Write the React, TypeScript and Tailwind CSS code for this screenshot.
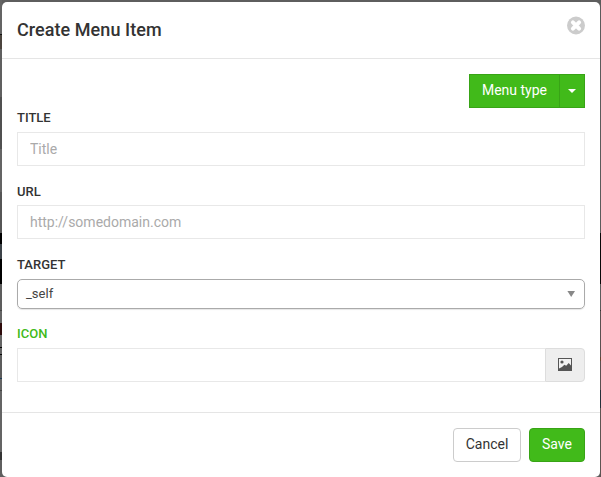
import type { ReactNode } from "react";

const leftEdge: [number, string][] = [
  [34, "#646464"], [1, "#111"], [14, "#4b443e"], [48, "#606060"], [52, "#505050"],
  [43, "#646464"], [41, "#565656"], [11, "#000"], [15, "#3c4248"], [25, "#000"],
  [26, "#5d5d5d"], [1, "#444"], [12, "#646464"], [12, "#2e0b0b"], [12, "#646464"],
  [1, "#050505"], [6, "#646464"], [1, "#050505"], [23, "#5c5c5c"], [1, "#1c3b55"],
  [11, "#646464"], [1, "#444"], [61, "#646464"], [8, "#333"], [17, "#5f5f5f"],
];

const rightEdge: [number, string][] = [
  [233, "#5b5b5b"], [51, "#080808"], [26, "#5b5b5b"], [1, "#333"],
  [46, "#5a5050"], [4, "#65452f"], [29, "#5a5050"], [18, "#24303a"], [69, "#5d5452"],
];

function Edge({ bands, className }: { bands: [number, string][]; className: string }) {
  return (
    <div className={`h-full shrink-0 overflow-hidden ${className}`} aria-hidden="true">
      {bands.map(([height, background], i) => (
        <div key={i} style={{ height, background }} />
      ))}
    </div>
  );
}

function Label({ children, className = "text-[#333]" }: { children: ReactNode; className?: string }) {
  return <label className={`block h-[18px] text-[13px] leading-[18px] font-medium ${className}`}>{children}</label>;
}

const inputClass =
  "block h-[34px] w-full border border-[#e8e8e8] bg-white px-3 text-sm text-[#555] outline-none placeholder:text-[#aaa]";

export default function App() {
  return (
    <div className="flex h-[477px] w-[601px] overflow-hidden bg-[#5e5e5e] font-[Roboto,sans-serif]">
      <Edge bands={leftEdge} className="w-[2px]" />
      <div className="flex min-w-0 flex-1 flex-col pt-[2px]">
        <div className="flex flex-1 flex-col rounded-[5px] bg-white">
          <header className="flex h-[57px] shrink-0 justify-between border-b border-[#e5e5e5] pt-[15px] pr-[15px] pl-[15px]">
            <h4 className="h-[26px] text-[18px] leading-[26px] font-medium tracking-[0.06px] text-[#333]">Create Menu Item</h4>
            <button className="-mt-[2px] h-[20px] w-[18px]" aria-label="Close">
              <svg width="18" height="20" viewBox="0 0 18 20">
                <circle cx="9" cy="10.5" r="9" fill="#ccc" />
                <path d="M5.9 7.4l6.2 6.2M12.1 7.4l-6.2 6.2" stroke="#fff" strokeWidth="4" strokeLinecap="round" />
              </svg>
            </button>
          </header>

          <main className="flex h-[353px] shrink-0 flex-col px-[15px] pt-[15px]">
            <div className="flex h-[34px] justify-end">
              <button className="h-[34px] w-[91px] border border-[#38a416] bg-[#41ba1a] pb-[2px] text-sm text-white">
                Menu type
              </button>
              <button
                className="-ml-px flex h-[34px] w-[26px] items-center justify-center border border-[#38a416] bg-[#41ba1a]"
                aria-label="Choose menu type"
              >
                <svg width="8" height="4" viewBox="0 0 8 4"><path d="M0 0h8L4 4z" fill="#fff" /></svg>
              </button>
            </div>
            <div className="mt-px"><Label>TITLE</Label></div>
            <input className={`${inputClass} mt-[5px]`} placeholder="Title" />
            <div className="mt-[17px]"><Label>URL</Label></div>
            <input className={`${inputClass} mt-[4px]`} placeholder="http://somedomain.com" />
            <div className="mt-[17px]"><Label>TARGET</Label></div>
            <button className="mt-[5px] flex h-[30px] shrink-0 items-center justify-between rounded-[5px] border border-[#aaa] pr-[9px] pl-2 text-[13px] text-[#444] shadow-[0_1px_1px_rgba(0,0,0,0.1)]">
              <span>_self</span>
              <svg width="8" height="6" viewBox="0 0 8 6"><path d="M.4 0h7.6L4.2 6z" fill="#888" /></svg>
            </button>
            <div className="mt-[16px]"><Label className="text-[#41ba1a]">ICON</Label></div>
            <div className="mt-[5px] flex h-[34px] shrink-0">
              <input className={`${inputClass} min-w-0 flex-1 border-r-0`} aria-label="Icon" />
              <button
                className="flex h-[34px] w-[40px] shrink-0 items-center justify-center rounded-r-[4px] border border-[#ddd] bg-[#eee] pb-px"
                aria-label="Pick icon"
              >
                <svg width="14" height="13" viewBox="0 0 14 13">
                  <path d="M0 0h14v13H0z" fill="#555" />
                  <path d="M1 1h12v6.6L10.7 5 8.2 7.8 6.4 6.8 4 9 1 10.6z" fill="#f2f2f2" />
                  <circle cx="4" cy="4" r="1.6" fill="#555" />
                </svg>
              </button>
            </div>
          </main>

          <footer className="flex flex-1 items-start justify-end gap-2 border-t border-[#e5e5e5] pt-[15px] pr-[15px]">
            <button className="h-[34px] w-[68px] rounded-[4px] border border-[#ccc] bg-white pb-[2px] text-sm text-[#333]">
              Cancel
            </button>
            <button className="h-[34px] w-[56px] rounded-[4px] border border-[#38a416] bg-[#41ba1a] pb-[2px] text-sm text-white">
              Save
            </button>
          </footer>
        </div>
      </div>
      <Edge bands={rightEdge} className="w-px" />
    </div>
  );
}
